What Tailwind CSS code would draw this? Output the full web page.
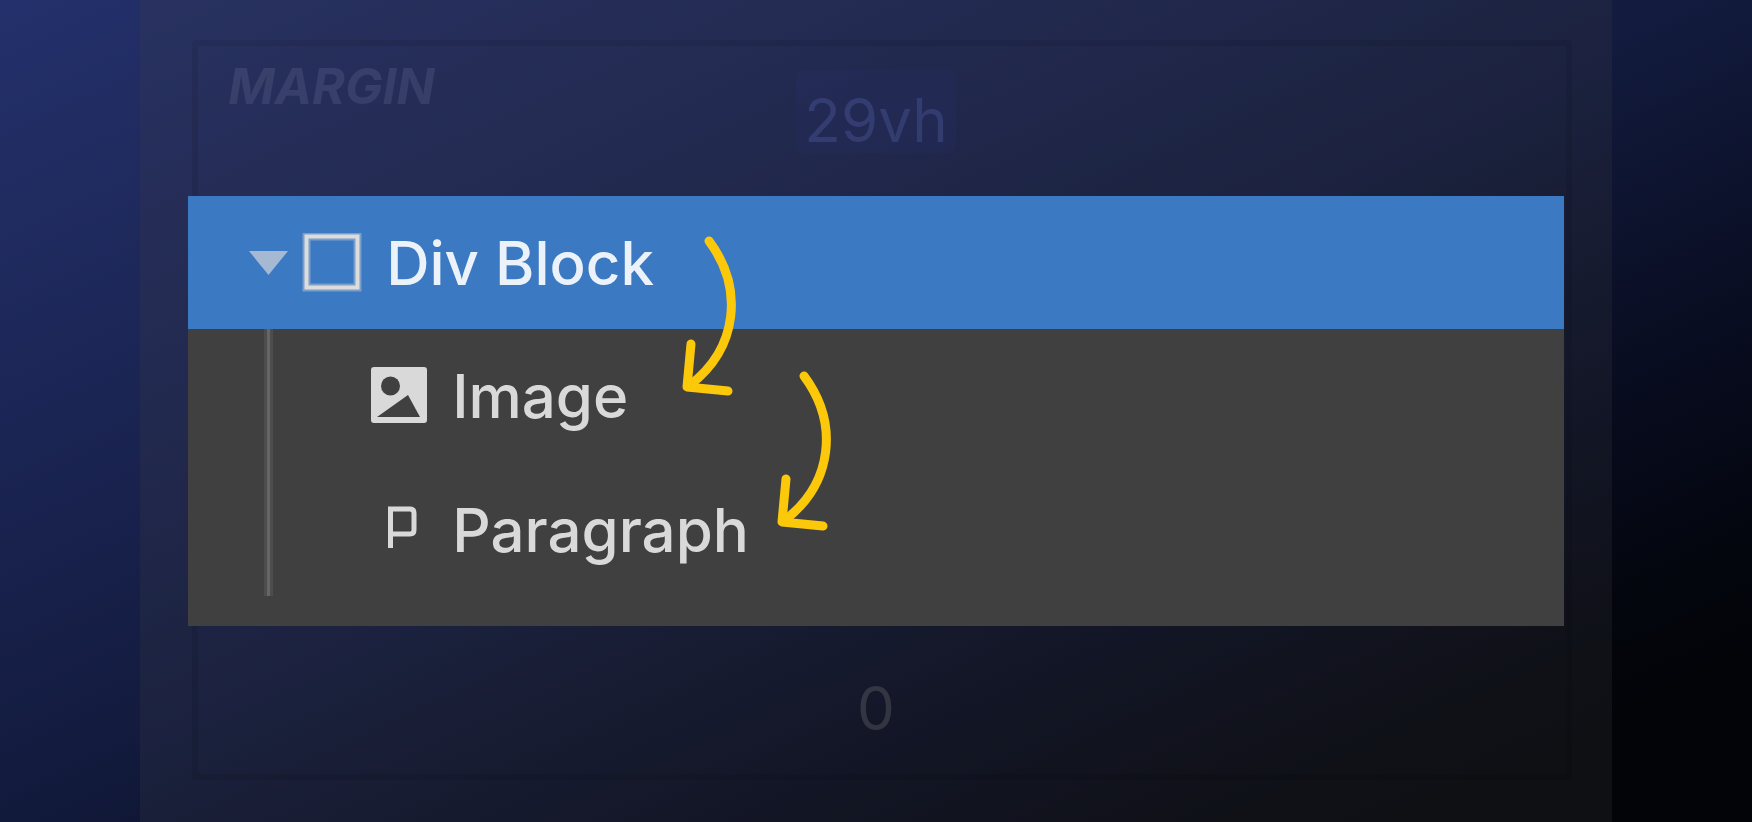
<!DOCTYPE html>
<html lang="en">
  <head>
    <meta charset="UTF-8" />
    <meta name="viewport" content="width=device-width, initial-scale=1.0" />
    <title>Navigator</title>
    <script src="https://cdn.jsdelivr.net/npm/@tailwindcss/browser@4"></script>
  </head>
  <body class="min-h-screen bg-[linear-gradient(155deg,#24306b_0%,#1c2656_25%,#121a3c_50%,#080c1f_70%,#04060f_82%,#030408_90%,#030407_100%)] px-[8%] font-['Inter',sans-serif]">
    <main class="min-h-screen bg-[#404048]/20 px-12 pt-10 pb-10">
      <!-- spacing box behind the navigator -->
      <section class="ml-1 -mr-2 border-6 border-black/8 rounded-sm">
        <div class="-ml-[10px] mr-0.5">
          <header class="grid h-[150px] grid-cols-3">
            <h2 class="pl-10 text-[50px] leading-[80px] font-bold italic text-[#8890b8]/18">MARGIN</h2>
            <button type="button" class="mt-6 h-21 justify-self-center rounded-lg bg-[#3040a0]/8 px-2 pt-2 text-[60px] leading-[84px] text-[#6878c8]/25">29vh</button>
          </header>

          <!-- element tree -->
          <div class="relative bg-[#404040] pb-[30px] text-[60px] font-medium text-[#d9d9d9]">
            <div class="flex h-[133px] items-center bg-[#3b79c3] pl-[60px] text-[#ebf2fa]">
              <button type="button" aria-label="Collapse" class="mr-[13px]">
                <svg class="block h-[26px] w-[41px]" viewBox="0 0 41 26"><path d="M1 1H40L20.500 25Z" fill="#a5bad2" /></svg>
              </button>
              <svg class="mr-6 size-[60px]" viewBox="0 0 60 60" fill="none">
                <rect x="4.500" y="3.500" width="51" height="51" stroke="#d9d9d9" stroke-opacity=".4" stroke-width="8" />
                <rect x="4.500" y="3.500" width="51" height="51" stroke="#dcdcda" stroke-width="4" />
              </svg>
              <span>Div Block</span>
            </div>

            <div class="ml-[76px] border-l-3 border-[#4d4d4d]">
              <ul class="border-l-3 border-[#666666]">
                <li class="flex h-[134px] items-center border-l-3 border-[#4d4d4d] pl-[95px]">
                  <svg class="mr-6 size-[60px]" viewBox="0 0 60 60">
                    <rect x="3" y="1" width="56" height="56" rx="3" fill="#d9d9d9" />
                    <circle cx="22.500" cy="20" r="9.500" fill="#404040" />
                    <path d="M9 51L40 29L52 51Z" fill="#404040" />
                  </svg>
                  <span>Image</span>
                </li>
                <li class="flex h-[133px] items-center border-l-3 border-[#4d4d4d] pl-[95px]">
                  <svg class="mr-6 size-[60px]" viewBox="0 0 60 60" fill="none">
                    <path d="M22.500 48V9H42Q46 9 46 13V30Q46 34 42 34H23" stroke="#d9d9d9" stroke-width="5" />
                  </svg>
                  <span>Paragraph</span>
                </li>
              </ul>
            </div>

            <!-- hand-drawn arrows -->
            <svg class="absolute top-[34px] left-[492px] h-[170px] w-[60px]" viewBox="0 0 60 170" fill="none" stroke="#fcc80a" stroke-width="9" stroke-linecap="round" stroke-linejoin="round">
              <path d="M29 11C64 58 58 118 10 155" />
              <path d="M11 114L7 157L48 161" />
            </svg>
            <svg class="absolute top-[169px] left-[587px] h-[170px] w-[60px]" viewBox="0 0 60 170" fill="none" stroke="#fcc80a" stroke-width="9" stroke-linecap="round" stroke-linejoin="round">
              <path d="M29 11C64 58 58 118 10 155" />
              <path d="M11 114L7 157L48 161" />
            </svg>
          </div>

          <footer class="flex h-[148px] items-center justify-center pb-1">
            <button type="button" class="rounded-lg px-2 pt-5 text-[60px] leading-[84px] text-[#b0b0a8]/20">0</button>
          </footer>
        </div>
      </section>
    </main>
  </body>
</html>
